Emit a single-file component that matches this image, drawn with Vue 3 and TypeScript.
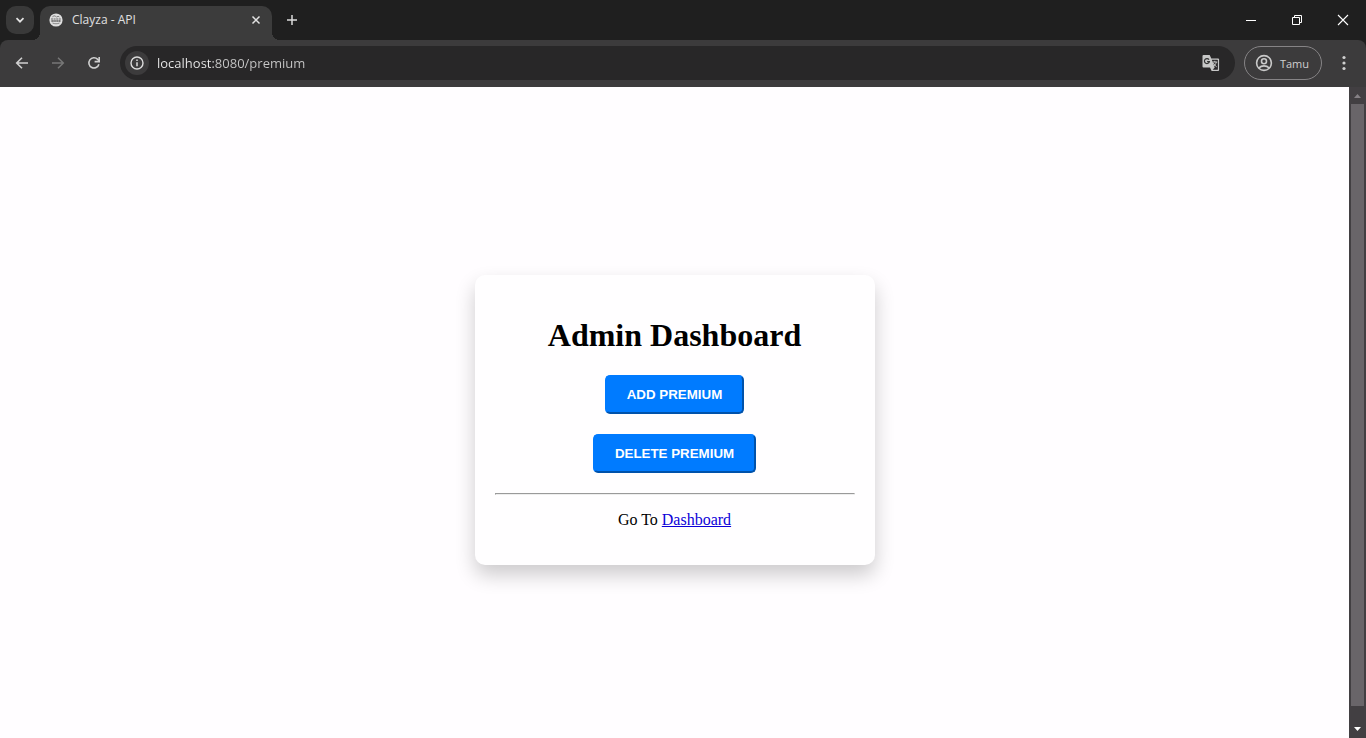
<script setup lang="ts">
import { ref } from 'vue'

const address = ref<string>('localhost:8080/premium')
const tabTitle = 'Clayza - API'
const profileName = 'Tamu'
const actions: string[] = ['ADD PREMIUM', 'DELETE PREMIUM']
</script>

<template>
  <div class="browser">
    <header class="tabstrip">
      <button class="tab-search" aria-label="Search tabs">
        <svg width="10" height="10" viewBox="0 0 10 10"><path d="M1.5 3.2 5 6.7 8.5 3.2" fill="none" stroke="#e3e3e3" stroke-width="1.7" /></svg>
      </button>
      <div class="tab">
        <svg class="favicon" width="14" height="14" viewBox="0 0 14 14">
          <circle cx="7" cy="7" r="6.6" fill="#dedede" />
          <path d="M3.4 3.8 5 2.8l1.600.4 1 1L9 3.200l1.400.8" stroke="#777" stroke-width=".9" fill="none" />
          <path d="M2 6h10" stroke="#666" stroke-width="1.1" stroke-dasharray="2 .6" />
          <path d="M2.400 8h9.200" stroke="#555" stroke-width="1.3" stroke-dasharray="1.500 .4" />
          <path d="M3.500 10c2 1 5 1 7 0" stroke="#808080" stroke-width=".9" fill="none" />
        </svg>
        <span class="tab-title">{{ tabTitle }}</span>
        <button class="tab-close" aria-label="Close tab">
          <svg width="10" height="10" viewBox="0 0 10 10"><path d="M1.5 1.5l7 7M8.5 1.5l-7 7" stroke="#e3e3e3" stroke-width="1.5" /></svg>
        </button>
      </div>
      <button class="new-tab" aria-label="New tab">
        <svg width="12" height="12" viewBox="0 0 12 12"><path d="M6 1v10M1 6h10" stroke="#dcdcdc" stroke-width="1.5" /></svg>
      </button>
      <div class="window-controls">
        <button aria-label="Minimize">
          <svg width="12" height="12" viewBox="0 0 12 12"><path d="M1 6.5h10" stroke="#fff" /></svg>
        </button>
        <button aria-label="Restore">
          <svg width="12" height="12" viewBox="0 0 12 12"><path d="M1.5 3.5h7v7h-7zM3.5 3.5v-2h7v7h-2" fill="none" stroke="#fff" /></svg>
        </button>
        <button aria-label="Close">
          <svg width="12" height="12" viewBox="0 0 12 12"><path d="M1 1l10 10M11 1 1 11" stroke="#fff" stroke-width="1.1" /></svg>
        </button>
      </div>
    </header>

    <nav class="toolbar">
      <button class="nav-button" aria-label="Back">
        <svg width="16" height="16" viewBox="0 0 16 16"><path d="M14 8H3M8 2.7 2.7 8 8 13.3" fill="none" stroke="#d0d0d0" stroke-width="1.6" /></svg>
      </button>
      <button class="nav-button" aria-label="Forward">
        <svg width="16" height="16" viewBox="0 0 16 16"><path d="M2 8h11M8 2.7 13.3 8 8 13.3" fill="none" stroke="#777" stroke-width="1.5" /></svg>
      </button>
      <button class="nav-button" aria-label="Reload">
        <svg width="16" height="16" viewBox="0 0 16 16">
          <path d="M12.9 9.2A5.1 5.1 0 1 1 11.7 4.4L13 5.8" fill="none" stroke="#d0d0d0" stroke-width="1.6" />
          <path d="M13.2 2v4.6H8.6" fill="none" stroke="#d0d0d0" stroke-width="1.6" />
        </svg>
      </button>
      <div class="omnibox">
        <button class="site-info" aria-label="View site information">
          <svg width="14" height="14" viewBox="0 0 14 14">
            <circle cx="7" cy="7" r="6" fill="none" stroke="#dcdcdc" stroke-width="1.4" />
            <path d="M7 6.2v4" stroke="#dcdcdc" stroke-width="1.5" />
            <path d="M7 3.6v1.5" stroke="#dcdcdc" stroke-width="1.5" />
          </svg>
        </button>
        <input v-model="address" class="address" type="text" aria-label="Address" spellcheck="false" />
        <button class="translate" aria-label="Translate this page">
          <svg width="18" height="18" viewBox="0 0 18 18">
            <path d="M1.5 1h6.2l1.6 3.5h6.8a1 1 0 0 1 1 1V16a1 1 0 0 1-1 1H9.6L8 13.5H1.5a1 1 0 0 1-1-1V2a1 1 0 0 1 1-1z" fill="#c7c7c7" />
            <path d="M9.8 5.7h5.5a.6.6 0 0 1 .6.6v8.9a.6.6 0 0 1-.6.6h-4.6l2-2.3z" fill="#2b292b" />
            <path d="M7 5.6A2.5 2.5 0 1 0 7.4 7.6H5.1" fill="none" stroke="#333" stroke-width="1.2" />
            <path d="M10.3 8h5M12.8 6.8V8M14.3 8c-.4 2-1.7 3.7-3.3 4.8M11.2 8.8c.7 1.7 2 3 3.5 4" fill="none" stroke="#c7c7c7" stroke-width="1" />
          </svg>
        </button>
      </div>
      <button class="profile">
        <svg width="18" height="18" viewBox="0 0 18 18">
          <circle cx="9" cy="9" r="7.4" fill="none" stroke="#c9c9c9" stroke-width="1.6" />
          <circle cx="9" cy="7.2" r="2.5" fill="none" stroke="#c9c9c9" stroke-width="1.6" />
          <path d="M3.8 14c2.8-2.8 7.6-2.8 10.4 0" fill="none" stroke="#c9c9c9" stroke-width="1.6" />
        </svg>
        <span>{{ profileName }}</span>
      </button>
      <button class="menu" aria-label="Menu">
        <svg width="4" height="16" viewBox="0 0 4 16" fill="#d0d0d0">
          <circle cx="2" cy="2.5" r="1.6" /><circle cx="2" cy="8" r="1.6" /><circle cx="2" cy="13.5" r="1.6" />
        </svg>
      </button>
    </nav>

    <div class="viewport">
      <main class="page">
        <section class="card">
          <h1>Admin Dashboard</h1>
          <div class="actions">
            <button v-for="label in actions" :key="label" class="action">{{ label }}</button>
          </div>
          <hr />
          <p>Go To <a href="#dashboard">Dashboard</a></p>
        </section>
      </main>
      <div class="scrollbar">
        <svg width="17" height="17" viewBox="0 0 17 17"><path d="M5 11h7L8.5 7z" fill="#858085" /></svg>
        <div class="thumb"></div>
        <svg width="17" height="17" viewBox="0 0 17 17"><path d="M5 6h7l-3.5 4z" fill="#fff" /></svg>
      </div>
    </div>
  </div>
</template>

<style>
html,
body {
  margin: 0;
  background: #fffdff;
}
</style>

<style scoped>
.browser {
  display: flex;
  flex-direction: column;
  height: 100vh;
  overflow: hidden;
  background: #1f1f1f;
}

.tabstrip button,
.toolbar button {
  display: flex;
  align-items: center;
  justify-content: center;
  flex: none;
  padding: 0;
  border: 0;
  background: none;
  font-family: "Open Sans", "Noto Sans", sans-serif;
}

.tabstrip {
  display: flex;
  flex: none;
  align-items: center;
  height: 40px;
  padding-left: 6px;
}

.tabstrip .tab-search {
  width: 28px;
  height: 28px;
  margin-right: 6px;
  border-radius: 10px;
  background: #393939;
}

.tab {
  position: relative;
  display: flex;
  align-self: flex-end;
  align-items: center;
  box-sizing: border-box;
  width: 232px;
  height: 34px;
  padding: 0 8px 6px 9px;
  border-radius: 10px 10px 0 0;
  background: #3c3c3c;
}

.tab::before,
.tab::after {
  content: "";
  position: absolute;
  bottom: 0;
  width: 8px;
  height: 8px;
}

.tab::before {
  right: 100%;
  background: radial-gradient(circle at 0 0, transparent 8px, #3c3c3c 8px);
}

.tab::after {
  left: 100%;
  background: radial-gradient(circle at 100% 0, transparent 8px, #3c3c3c 8px);
}

.tab-title {
  flex: 1;
  margin-left: 9px;
  color: #e0e0e0;
  font: 12px/18px "Open Sans", "Noto Sans", sans-serif;
}

.tabstrip .tab-close {
  width: 16px;
  height: 16px;
}

.tabstrip .new-tab {
  width: 28px;
  height: 28px;
  margin-left: 6px;
}

.window-controls {
  display: flex;
  margin-left: auto;
}

.window-controls button {
  width: 46px;
  height: 40px;
}

.toolbar {
  display: flex;
  flex: none;
  align-items: center;
  box-sizing: border-box;
  height: 47px;
  padding: 0 8px 1px 4px;
  border-radius: 8px 8px 0 0;
  background: #3c3b3c;
}

.toolbar .nav-button {
  width: 36px;
  height: 36px;
}

.omnibox {
  display: flex;
  flex: 1;
  align-items: center;
  height: 34px;
  margin: 0 9px 0 8px;
  padding: 0 12px 0 5px;
  border-radius: 17px;
  background: #282728;
}

.toolbar .site-info {
  width: 24px;
  height: 24px;
  border-radius: 12px;
  background: #3c3b3c;
}

/* The host is drawn brighter than the port and path that follow it. */
.address {
  flex: 1;
  min-width: 0;
  height: 24px;
  margin-left: 8px;
  padding: 0;
  border: 0;
  outline: 0;
  background: linear-gradient(90deg, #ececec 56px, #c8c8c8 56px) text;
  color: transparent;
  caret-color: #ececec;
  font: 13px/24px "Open Sans", "Noto Sans", sans-serif;
}

.toolbar .translate {
  width: 24px;
  height: 24px;
}

.toolbar .profile {
  box-sizing: border-box;
  height: 34px;
  gap: 7px;
  padding: 0 12px 0 10px;
  border: 1px solid #868486;
  border-radius: 17px;
  color: #cfcfcf;
  font-size: 11px;
}

.toolbar .menu {
  width: 28px;
  height: 28px;
  margin-left: 8px;
}

.viewport {
  display: flex;
  flex: 1;
  min-height: 0;
}

.page {
  display: flex;
  flex: 1;
  align-items: center;
  justify-content: center;
  padding-top: 14px;
  background: #fffdff;
  color: #000;
  font: 16px/18px "Liberation Serif", "Times New Roman", serif;
}

.card {
  box-sizing: border-box;
  width: 400px;
  max-width: 100%;
  padding: 20px;
  border-radius: 10px;
  background: #fffeff;
  box-shadow: 0 10px 20px rgba(0, 0, 0, 0.2);
  text-align: center;
}

h1 {
  margin: 21px 0;
  font-size: 32px;
  line-height: 38px;
}

.actions {
  display: flex;
  flex-direction: column;
  align-items: center;
  gap: 20px;
  margin-bottom: 20px;
}

.action {
  padding: 10px 20px;
  border: 2px outset #007bff;
  border-radius: 5px;
  background: #007bff;
  color: #fff;
  font-family: "Liberation Sans", Arial, sans-serif;
  font-weight: bold;
}

hr {
  margin: 0;
}

p {
  margin: 16px 0;
}

a {
  color: #0c00d8;
}

.scrollbar {
  display: flex;
  flex: none;
  flex-direction: column;
  width: 17px;
  background: #423f42;
}

.scrollbar svg {
  flex: none;
}

.thumb {
  flex: 1;
  margin: 0 2px 15px;
  background: #696569;
}
</style>
